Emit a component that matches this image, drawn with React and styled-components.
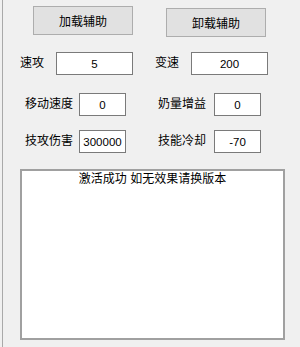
import React from "react";
import styled, { createGlobalStyle } from "styled-components";

const Global = createGlobalStyle`
  html, body { margin: 0; padding: 0; background: #f0f0f0; }
  body { font-family: "Liberation Sans", "Noto Sans CJK SC", sans-serif; font-size: 12px; color: #000; }
`;

const Window = styled.div`
  box-sizing: border-box;
  width: 298px;
  height: 347px;
  margin-left: 2px;
  border-left: 1px solid #a9a9a9;
  background: #f0f0f0;
  display: flex;
  flex-direction: column;
`;

const ButtonRow = styled.div`
  display: flex;
  align-items: flex-start;
  padding: 6px 0 0 30px;
  gap: 33px;
  height: 31px;
`;

const Button = styled.button`
  box-sizing: border-box;
  width: 100px;
  height: 29px;
  margin-top: ${(p) => p.$drop || 0}px;
  background: #e1e1e1;
  border: 1px solid #adadad;
  border-radius: 0;
  font-family: "Liberation Sans", "Noto Sans CJK SC", sans-serif;
  font-size: 12px;
  color: #000;
  padding: 0;
`;

const FieldRow = styled.div`
  display: grid;
  grid-template-columns: ${(p) => p.$cols};
  align-items: center;
  height: 23px;
  margin-top: ${(p) => p.$top}px;
`;

const Label = styled.span`
  font-size: 12px;
  white-space: nowrap;
  line-height: 23px;
`;

const Box = styled.input`
  box-sizing: border-box;
  width: 100%;
  height: 23px;
  border: 1px solid #7a7a7a;
  background: #fff;
  text-align: center;
  font-family: "Liberation Sans", sans-serif;
  font-size: 11.5px;
  color: #000;
  padding: 0;
  outline: none;
`;

const Log = styled.div`
  box-sizing: border-box;
  margin: 16px 0 0 17px;
  width: 265px;
  height: 171px;
  border: 2px solid #a0a0a0;
  background: #fff;
  text-align: center;
  font-size: 12px;
  line-height: 14px;
  padding-top: 1px;
`;

const Spacer = styled.span``;

function Row({ top, cols, a, av, b, bv }) {
  return (
    <FieldRow $top={top} $cols={cols}>
      <Spacer />
      <Label>{a}</Label>
      <Box readOnly value={av} />
      <Spacer />
      <Label>{b}</Label>
      <Box readOnly value={bv} />
    </FieldRow>
  );
}

export default function App() {
  return (
    <>
      <Global />
      <Window>
        <ButtonRow>
          <Button>加载辅助</Button>
          <Button $drop={2}>卸载辅助</Button>
        </ButtonRow>
        <Row top={15} cols="17px 36px 77px 22px 36px 77px" a="速攻" av="5" b="变速" bv="200" />
        <Row top={18} cols="22px 54px 47px 32px 56px 47px" a="移动速度" av="0" b="奶量增益" bv="0" />
        <Row top={14} cols="22px 54px 47px 32px 56px 47px" a="技攻伤害" av="300000" b="技能冷却" bv="-70" />
        <Log>激活成功 如无效果请换版本</Log>
      </Window>
    </>
  );
}
